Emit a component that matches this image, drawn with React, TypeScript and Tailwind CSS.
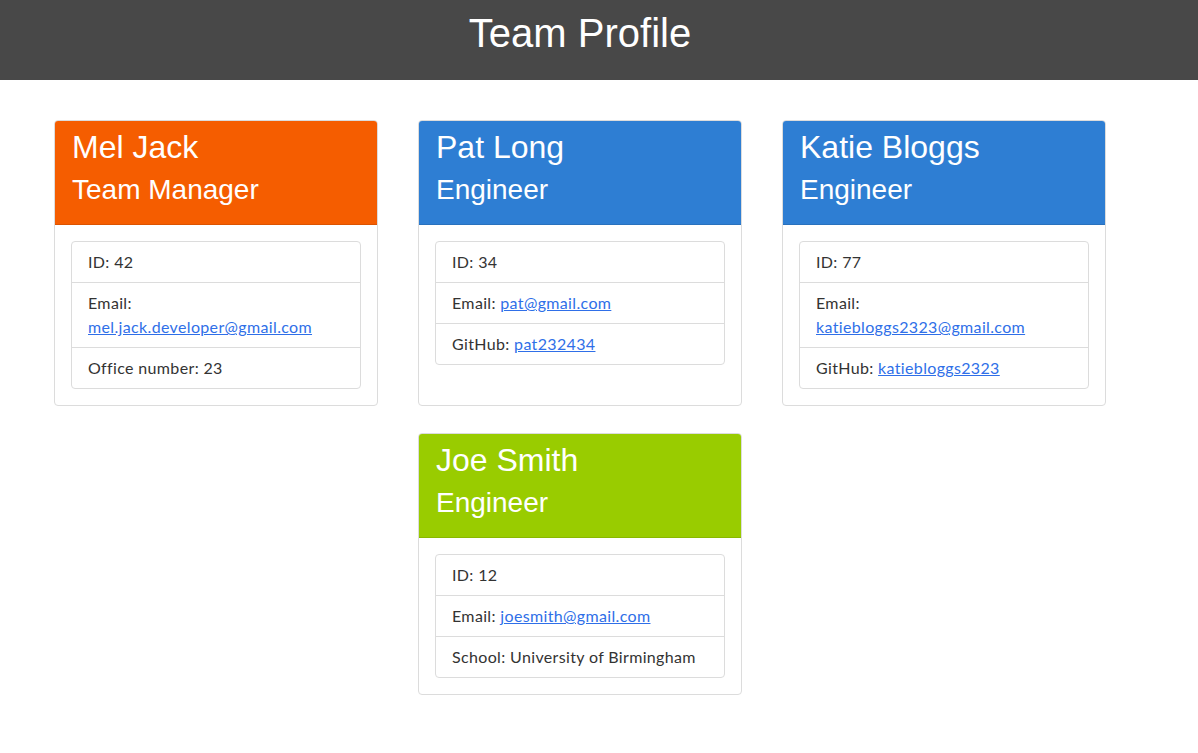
type Member = {
  name: string;
  role: string;
  color: string;
  id: number;
  email: string;
  extra: { label: string; value: string; link?: boolean };
};

const team: Member[] = [
  {
    name: "Mel Jack",
    role: "Team Manager",
    color: "bg-[#f55d00]",
    id: 42,
    email: "mel.jack.developer@gmail.com",
    extra: { label: "Office number", value: "23" },
  },
  {
    name: "Pat Long",
    role: "Engineer",
    color: "bg-[#2e7ed3]",
    id: 34,
    email: "pat@gmail.com",
    extra: { label: "GitHub", value: "pat232434", link: true },
  },
  {
    name: "Katie Bloggs",
    role: "Engineer",
    color: "bg-[#2e7ed3]",
    id: 77,
    email: "katiebloggs2323@gmail.com",
    extra: { label: "GitHub", value: "katiebloggs2323", link: true },
  },
  {
    name: "Joe Smith",
    role: "Engineer",
    color: "bg-[#99cc00]",
    id: 12,
    email: "joesmith@gmail.com",
    extra: { label: "School", value: "University of Birmingham" },
  },
];

const linkCls = "text-[#2f6fe8] underline underline-offset-[1px]";
const headFont = "font-['Liberation_Sans',Arial,sans-serif]";

function Card({ m }: { m: Member }) {
  return (
    <div className="w-[324px] rounded border border-[#dcdcdc] bg-white flex flex-col">
      <div className={`${m.color} text-white px-[17px] pt-[7px] pb-[17px] rounded-t-[3px] border-b border-black/10 ${headFont}`}>
        <h2 className="text-[32px] leading-[38px] mb-[7px]">{m.name}</h2>
        <h3 className="text-[28px] leading-[34px]">{m.role}</h3>
      </div>
      <div className="p-4">
        <ul className="border border-[#dcdcdc] rounded text-[16px] text-[#333] leading-6 tracking-[0.35px]">
          <li className="px-4 py-2">ID: {m.id}</li>
          <li className="px-4 py-2 border-t border-[#dcdcdc]">
            Email: <a href="#" className={linkCls}>{m.email}</a>
          </li>
          <li className="px-4 py-2 border-t border-[#dcdcdc]">
            {m.extra.label}:{" "}
            {m.extra.link ? <a href="#" className={linkCls}>{m.extra.value}</a> : m.extra.value}
          </li>
        </ul>
      </div>
    </div>
  );
}

export default function App() {
  return (
    <div className="min-h-screen bg-white font-['Lato','Open_Sans',sans-serif]">
      <header className="bg-[#484848] h-20">
        <div className="w-[1160px] h-full flex items-center justify-center">
          <h1 className={`text-white text-[40px] -mt-[14px] ${headFont}`}>Team Profile</h1>
        </div>
      </header>
      <main className="w-[1160px] px-[54px] pt-10">
        <div className="flex flex-wrap justify-center gap-x-10 gap-y-[27px]">
          {team.map((m) => (
            <div key={m.name} className="flex">
              <Card m={m} />
            </div>
          ))}
        </div>
      </main>
    </div>
  );
}
